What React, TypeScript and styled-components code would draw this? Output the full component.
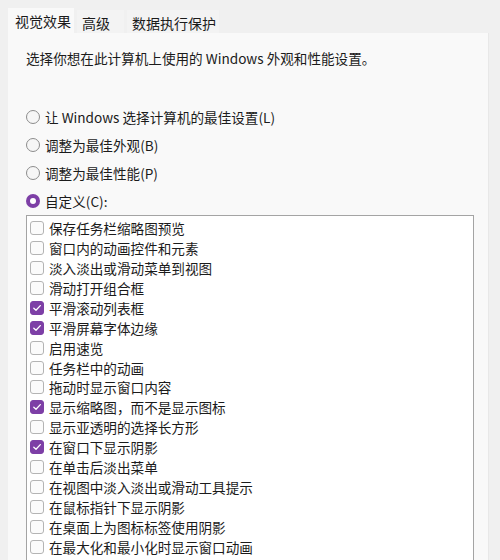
import React from 'react';
import styled, { createGlobalStyle } from 'styled-components';

const ACCENT = '#7d3fa6';

const GlobalStyle = createGlobalStyle`
  html, body {
    margin: 0;
    padding: 0;
    background: #f0f0f0;
  }
  body {
    font-family: "Noto Sans CJK SC", "Noto Sans", sans-serif;
    font-size: 13.6px;
    color: #1b1b1b;
  }
`;

const Window = styled.div`
  width: 500px;
  height: 560px;
  overflow: hidden;
  display: flex;
  flex-direction: column;
  padding-left: 8px;
  padding-right: 11px;
  box-sizing: border-box;
`;

const TabStrip = styled.div`
  flex-shrink: 0;
  display: flex;
  align-items: flex-end;
  gap: 3px;
  height: 33px;
`;

const Tab = styled.div<{ $active?: boolean; $width: number }>`
  width: ${(p) => p.$width}px;
  height: ${(p) => (p.$active ? 25 : 23)}px;
  box-sizing: border-box;
  display: flex;
  align-items: center;
  padding-left: ${(p) => (p.$active ? 7 : 5)}px;
  padding-top: ${(p) => (p.$active ? 0 : 2)}px;
  background: ${(p) => (p.$active ? '#f9f9f9' : '#f3f3f3')};
  line-height: 1;
  font-size: 14px;
`;

const Panel = styled.div`
  flex: 1;
  min-height: 0;
  overflow: hidden;
  display: flex;
  flex-direction: column;
  background: #f9f9f9;
  padding: 16px 15px 0 18px;
  border-right: 1px solid #e8e8e8;
`;

const Description = styled.p`
  margin: 0;
  line-height: 18px;
`;

const RadioGroup = styled.div`
  margin-top: 36px;
  display: flex;
  flex-direction: column;
`;

const RadioRow = styled.label`
  height: 28px;
  display: flex;
  align-items: center;
  gap: 5px;
`;

const RadioCircle = styled.span<{ $checked?: boolean }>`
  width: 14px;
  height: 14px;
  border-radius: 50%;
  box-sizing: border-box;
  flex-shrink: 0;
  background: ${(p) => (p.$checked ? ACCENT : '#f6f6f6')};
  border: ${(p) => (p.$checked ? 'none' : '1px solid #8c8c8c')};
  display: flex;
  align-items: center;
  justify-content: center;

  &::after {
    content: '';
    display: ${(p) => (p.$checked ? 'block' : 'none')};
    width: 6px;
    height: 6px;
    border-radius: 50%;
    background: #ffffff;
  }
`;

const ListBox = styled.div`
  flex: 1;
  width: 448px;
  box-sizing: border-box;
  background: #ffffff;
  border: 1px solid #a4a4a4;
  border-bottom: none;
  padding: 2px 0 0 3px;
  display: flex;
  flex-direction: column;
`;

const CheckRow = styled.label`
  flex-shrink: 0;
  height: 19.94px;
  display: flex;
  align-items: center;
  gap: 5px;
  white-space: nowrap;
`;

const Box = styled.span<{ $checked?: boolean }>`
  width: 14px;
  height: 14px;
  box-sizing: border-box;
  border-radius: 3px;
  flex-shrink: 0;
  background: ${(p) => (p.$checked ? ACCENT : '#fbfbfb')};
  border: 1px solid ${(p) => (p.$checked ? ACCENT : '#b4b4b4')};
  display: flex;
  align-items: center;
  justify-content: center;
`;

const radios = [
  { label: '让 Windows 选择计算机的最佳设置(L)', checked: false },
  { label: '调整为最佳外观(B)', checked: false },
  { label: '调整为最佳性能(P)', checked: false },
  { label: '自定义(C):', checked: true },
];

const options = [
  { label: '保存任务栏缩略图预览', checked: false },
  { label: '窗口内的动画控件和元素', checked: false },
  { label: '淡入淡出或滑动菜单到视图', checked: false },
  { label: '滑动打开组合框', checked: false },
  { label: '平滑滚动列表框', checked: true },
  { label: '平滑屏幕字体边缘', checked: true },
  { label: '启用速览', checked: false },
  { label: '任务栏中的动画', checked: false },
  { label: '拖动时显示窗口内容', checked: false },
  { label: '显示缩略图，而不是显示图标', checked: true },
  { label: '显示亚透明的选择长方形', checked: false },
  { label: '在窗口下显示阴影', checked: true },
  { label: '在单击后淡出菜单', checked: false },
  { label: '在视图中淡入淡出或滑动工具提示', checked: false },
  { label: '在鼠标指针下显示阴影', checked: false },
  { label: '在桌面上为图标标签使用阴影', checked: false },
  { label: '在最大化和最小化时显示窗口动画', checked: false },
];

const CheckMark = () => (
  <svg width="10" height="10" viewBox="0 0 10 10">
    <polyline
      points="1.8,5.2 4,7.3 8.3,2.6"
      fill="none"
      stroke="#ffffff"
      strokeWidth="1.3"
      strokeLinecap="round"
      strokeLinejoin="round"
    />
  </svg>
);

const App = () => {
  return (
    <>
      <GlobalStyle />
      <Window>
        <TabStrip>
          <Tab $active $width={66}>视觉效果</Tab>
          <Tab $width={47}>高级</Tab>
          <Tab $width={92}>数据执行保护</Tab>
        </TabStrip>
        <Panel>
          <Description>选择你想在此计算机上使用的 Windows 外观和性能设置。</Description>
          <RadioGroup>
            {radios.map((r) => (
              <RadioRow key={r.label}>
                <RadioCircle $checked={r.checked} />
                {r.label}
              </RadioRow>
            ))}
          </RadioGroup>
          <ListBox>
            {options.map((o) => (
              <CheckRow key={o.label}>
                <Box $checked={o.checked}>{o.checked && <CheckMark />}</Box>
                {o.label}
              </CheckRow>
            ))}
          </ListBox>
        </Panel>
      </Window>
    </>
  );
};

export default App;
